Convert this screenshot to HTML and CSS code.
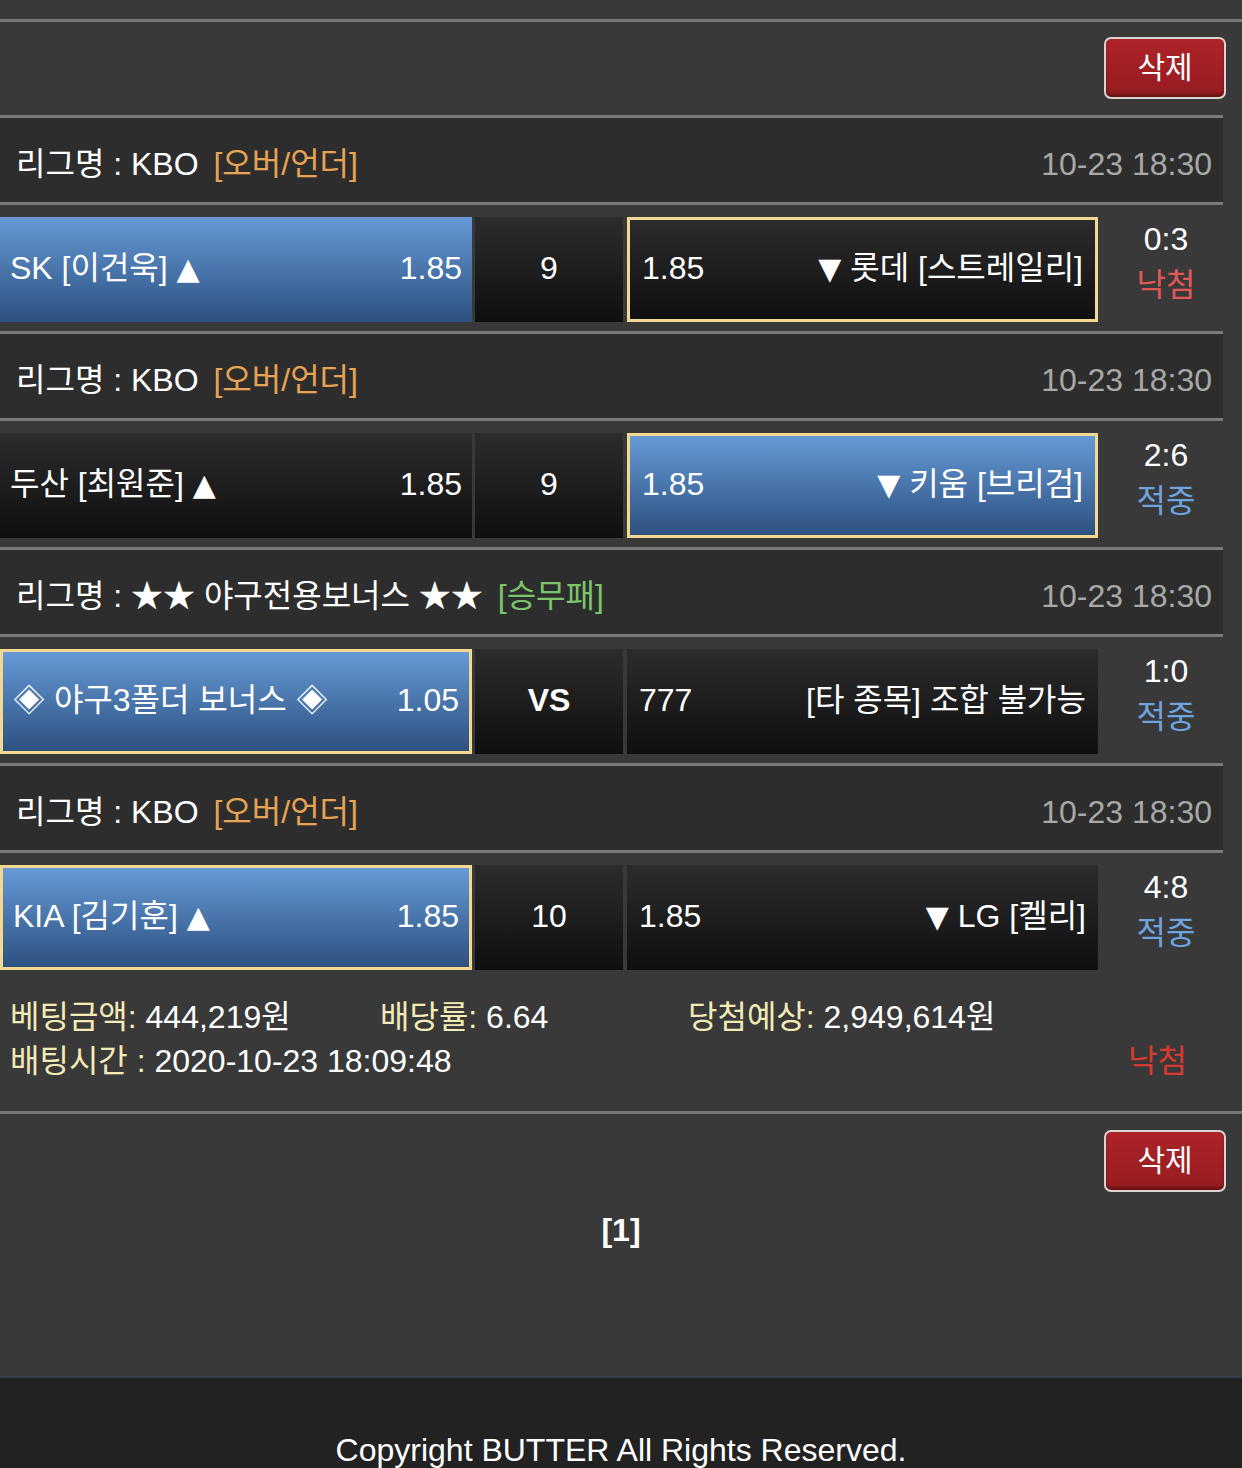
FILE: index.html
```html
<!DOCTYPE html>
<html lang="ko">
<head>
  <meta charset="UTF-8" />
  <meta name="viewport" content="width=device-width, initial-scale=1.0" />
  <title>베팅내역</title>
  <link rel="stylesheet" href="styles.css">
</head>
<body>
  <div class="rule"></div>

  <div class="toolbar">
    <button class="btn-del">삭제</button>
  </div>

  <div class="bet">
    <div class="game">
      <div class="league">
        <span>리그명 : KBO <em class="tag-ou">[오버/언더]</em></span>
        <span class="date">10-23 18:30</span>
      </div>
      <div class="match">
        <div class="cell team blue"><span>SK [이건욱] <i>▲</i></span><span>1.85</span></div>
        <div class="cell mid dark">9</div>
        <div class="cell team dark picked"><span>1.85</span><span><i>▼</i> 롯데 [스트레일리]</span></div>
        <div class="score"><span>0:3</span><span class="lose">낙첨</span></div>
      </div>
    </div>

    <div class="game">
      <div class="league">
        <span>리그명 : KBO <em class="tag-ou">[오버/언더]</em></span>
        <span class="date">10-23 18:30</span>
      </div>
      <div class="match">
        <div class="cell team dark"><span>두산 [최원준] <i>▲</i></span><span>1.85</span></div>
        <div class="cell mid dark">9</div>
        <div class="cell team blue picked"><span>1.85</span><span><i>▼</i> 키움 [브리검]</span></div>
        <div class="score"><span>2:6</span><span class="win">적중</span></div>
      </div>
    </div>

    <div class="game">
      <div class="league">
        <span>리그명 : ★★ 야구전용보너스 ★★ <em class="tag-wdl">[승무패]</em></span>
        <span class="date">10-23 18:30</span>
      </div>
      <div class="match">
        <div class="cell team blue picked"><span>◈ 야구3폴더 보너스 ◈</span><span>1.05</span></div>
        <div class="cell mid dark vs">VS</div>
        <div class="cell team dark"><span>777</span><span>[타 종목] 조합 불가능</span></div>
        <div class="score"><span>1:0</span><span class="win">적중</span></div>
      </div>
    </div>

    <div class="game">
      <div class="league">
        <span>리그명 : KBO <em class="tag-ou">[오버/언더]</em></span>
        <span class="date">10-23 18:30</span>
      </div>
      <div class="match">
        <div class="cell team blue picked"><span>KIA [김기훈] <i>▲</i></span><span>1.85</span></div>
        <div class="cell mid dark">10</div>
        <div class="cell team dark"><span>1.85</span><span><i>▼</i> LG [켈리]</span></div>
        <div class="score"><span>4:8</span><span class="win">적중</span></div>
      </div>
    </div>

    <div class="summary">
      <div class="sum-line">
        <span><b>베팅금액:</b> 444,219원</span>
        <span><b>배당률:</b> 6.64</span>
        <span><b>당첨예상:</b> 2,949,614원</span>
      </div>
      <div class="sum-line2">
        <span><b>배팅시간 :</b> 2020-10-23 18:09:48</span>
        <span class="result">낙첨</span>
      </div>
    </div>
  </div>

  <div class="toolbar toolbar-bottom">
    <button class="btn-del">삭제</button>
  </div>

  <div class="paging">[1]</div>

  <div class="footer">Copyright BUTTER All Rights Reserved.</div>
</body>
</html>
```

FILE: styles.css
```css
body { margin: 0; background: #393939; color: #fff; font-family: "Liberation Sans", "Noto Sans CJK KR", sans-serif; font-size: 32px; line-height: 40px; }
em { font-style: normal; }
i { font-style: normal; font-family: "DejaVu Sans", sans-serif; font-size: 30px; }
b { font-weight: normal; color: #f3ebb6; }

.rule { margin-top: 19px; height: 3px; background: #777; }

.toolbar { display: flex; justify-content: flex-end; padding: 15px 16px 16px 0; }
.toolbar-bottom { padding-top: 16px; padding-bottom: 0; }
.btn-del { width: 122px; height: 62px; font-family: "Noto Sans CJK KR", sans-serif; font-size: 30px; line-height: 40px; color: #fff; background: linear-gradient(#ad2328, #951c20); border: 2px solid #d9d3d3; border-radius: 7px; box-shadow: inset 0 -3px 3px rgba(0,0,0,0.3); padding: 0 0 6px; }

.game { padding-bottom: 9px; }
.league { display: flex; justify-content: space-between; align-items: center; width: 1223px; box-sizing: border-box; height: 90px; padding: 8px 11px 0 16px; background: #2d2d2d; border-top: 3px solid #7a7a7a; border-bottom: 3px solid #7a7a7a; }
.league > span { height: 40px; }
.league .date { color: #a8a8a8; }
.tag-ou { color: #e6a452; margin-left: 6px; }
.tag-wdl { color: #7cc46a; margin-left: 6px; }

.match { display: flex; margin-top: 12px; height: 105px; }
.cell { box-sizing: border-box; display: flex; align-items: center; padding-bottom: 4px; }
.cell > span { height: 40px; white-space: nowrap; }
.team { width: 472px; justify-content: space-between; padding: 0 10px 4px; }
.team + .mid { margin-left: 3px; }
.mid { width: 148px; justify-content: center; }
.mid + .team { margin-left: 4px; width: 471px; padding: 0 12px 4px; }
.vs { font-weight: bold; }
.blue { background: linear-gradient(#6699d6, #2c5180); }
.dark { background: linear-gradient(#2c2c2c, #0f0f0f); }
.picked { border: 3px solid #f2d993; }

.score { width: 136px; display: flex; flex-direction: column; align-items: center; padding-top: 2px; }
.score > span { height: 46px; }
.lose { color: #e05858; }
.win { color: #6ea3dc; }

.summary { padding: 18px 0 0 10px; height: 114px; border-bottom: 3px solid #777; }
.sum-line { display: grid; grid-template-columns: 370px 308px auto; height: 44px; }
.sum-line > span, .sum-line2 > span { height: 40px; }
.sum-line2 { display: flex; justify-content: space-between; padding-right: 55px; height: 44px; }
.result { color: #d83a32; }

.paging { text-align: center; font-weight: bold; padding-top: 18px; height: 166px; }

.footer { border-top: 2px solid #323c4a; background: #222; text-align: center; padding-top: 52px; height: 90px; }
```
